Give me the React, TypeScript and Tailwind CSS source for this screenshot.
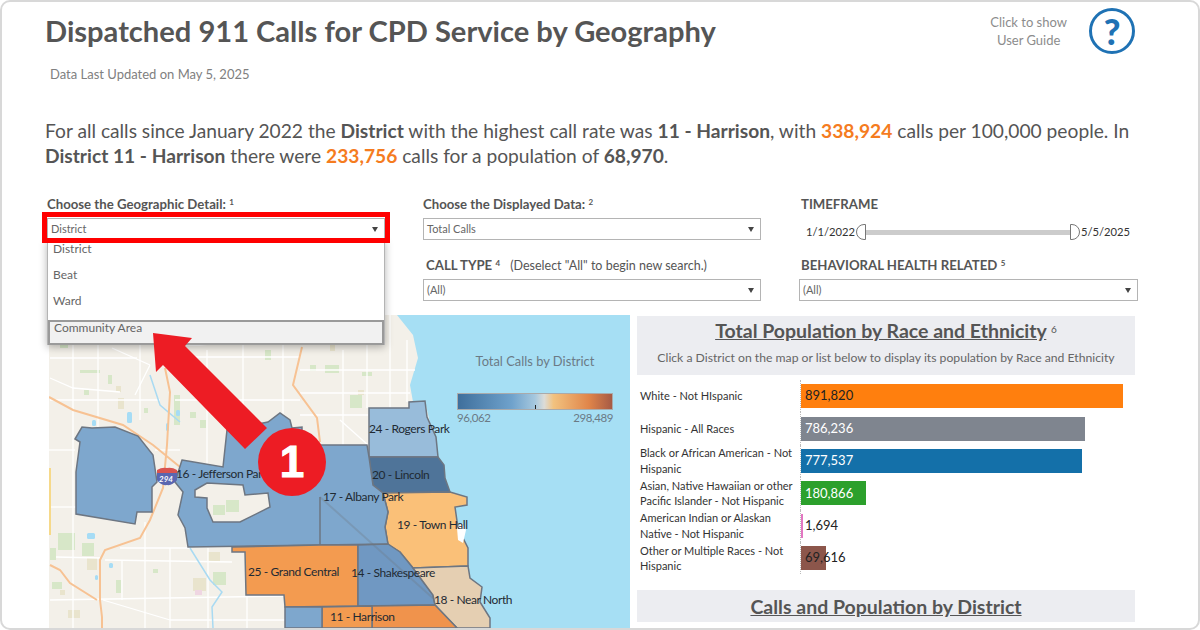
const races = [
  { label: "White - Not HIspanic", value: 891820, bar: "bg-[#ff7f0e]", text: "text-[#222]" },
  { label: "Hispanic - All Races", value: 786236, bar: "bg-[#7f858f]", text: "text-white" },
  { label: "Black or African American - Not Hispanic", value: 777537, bar: "bg-[#1470a9]", text: "text-white" },
  { label: "Asian, Native Hawaiian or other Pacific Islander - Not Hispanic", value: 180866, bar: "bg-[#2ca02c]", text: "text-white" },
  { label: "American Indian or Alaskan Native - Not Hispanic", value: 1694, bar: "bg-[#e377c2]", text: "text-[#222]" },
  { label: "Other or Multiple Races - Not Hispanic", value: 69616, bar: "bg-[#8c564b]", text: "text-[#222]" },
];

const districts = [
  { fill: "#98bcda", d: "M369 408 L409 408 L409 402 L425 401 L427 417 L436 437 L438 457 L369 457 Z" },
  { fill: "#4f7499", d: "M369 457 L438 457 L444 465 L445 478 L450 492 L383 493 L373 485 Z" },
  { fill: "#fac078", d: "M383 493 L450 492 L467 497 L467 505 L455 507 L458 528 L468 548 L468 566 L413 568 L400 552 L388 545 L385 527 L388 512 Z" },
  { fill: "#7ea7cd", d: "M75 439 L82 427 L92 428 L115 427 L138 436 L153 455 L157 482 L152 487 L152 512 L137 512 L135 524 L76 514 L76 472 L80 442 Z" },
  {
    // Jefferson Park and Albany Park read as one blue mass, with a hole around O'Hare side streets
    fill: "#7ea7cd",
    d: "M182 460 L223 467 L227 430 L268 422 L280 413 L290 420 L292 428 L302 427 L302 445 L367 445 L369 457 L373 485 L383 493 L388 512 L385 527 L388 544 L320 545 L188 547 L185 528 L178 515 L183 492 L175 482 Z M195 490 L207 483 L243 485 L245 495 L268 493 L270 507 L240 522 L213 522 L207 508 L207 498 L195 497 Z",
  },
  { fill: "#f39b50", d: "M232 547 L320 545 L358 545 L358 606 L285 607 L284 595 L246 595 L245 552 L232 552 Z" },
  { fill: "#7098c2", d: "M358 545 L388 544 L400 552 L413 568 L433 595 L435 605 L358 606 Z" },
  { fill: "#e5cfb2", d: "M413 568 L468 566 L470 578 L482 587 L480 602 L490 618 L490 628 L457 628 L435 605 L433 595 Z" },
  { fill: "#f0934c", d: "M372 606 L435 605 L457 628 L372 628 Z" },
  { fill: "#f39b50", d: "M322 607 L372 606 L372 628 L322 628 Z" },
  { fill: "#7ea7cd", d: "M285 607 L322 607 L322 628 L285 628 Z" },
];

const labels = [
  { text: "16 - Jefferson Park", x: 176, y: 478 },
  { text: "24 - Rogers Park", x: 369, y: 433 },
  { text: "20 - Lincoln", x: 372, y: 479 },
  { text: "17 - Albany Park", x: 323, y: 501 },
  { text: "19 - Town Hall", x: 397, y: 529 },
  { text: "14 - Shakespeare", x: 351, y: 577 },
  { text: "25 - Grand Central", x: 248, y: 576 },
  { text: "18 - Near North", x: 434, y: 604 },
  { text: "11 - Harrison", x: 330, y: 621 },
];

const roads = [
  "M50 358 L137 358",
  "M50 400 L160 400",
  "M73 345 L73 628",
  "M98 345 L98 440",
  "M112 348 L150 365",
  "M50 378 L73 388 L120 392",
  "M140 345 L140 420",
  "M150 365 L135 395",
  "M170 345 L200 345 L250 340",
  "M207 350 L207 465",
  "M243 345 L243 425",
  "M283 345 L283 420",
  "M180 357 L300 357",
  "M175 400 L300 400",
  "M49 450 L75 450",
  "M49 507 L76 507",
  "M155 450 L180 450",
  "M105 560 L232 562",
  "M56 557 L100 558",
  "M120 548 L190 548",
  "M50 600 L285 596",
  "M103 600 L170 620",
  "M170 620 L285 620",
  "M145 522 L145 628",
  "M170 548 L170 628",
  "M208 548 L208 628",
  "M247 596 L247 628",
  "M122 560 L122 600",
  "M305 340 L360 340",
  "M343 350 L343 445",
  "M367 330 L367 408",
  "M390 315 L390 408",
  "M407 340 L407 402",
  "M300 370 L415 370",
  "M300 393 L410 393",
  "M300 415 L368 415",
  "M340 420 L368 445",
];

const greens = [
  [58, 533, 17, 17], [82, 543, 12, 13], [52, 582, 10, 7], [116, 580, 5, 13], [153, 569, 5, 4], [213, 572, 13, 13],
  [108, 375, 4, 9], [84, 390, 5, 5], [144, 408, 4, 5], [200, 420, 6, 8], [255, 330, 14, 5], [265, 350, 6, 10],
  [325, 365, 14, 8], [362, 372, 10, 4], [350, 395, 12, 13], [60, 345, 8, 3], [80, 370, 20, 3], [297, 430, 8, 16],
  [190, 412, 6, 6], [174, 395, 6, 30], [50, 548, 6, 12], [335, 320, 10, 8], [310, 365, 6, 6], [213, 505, 12, 10],
  [226, 500, 13, 12],
];

const beiges = [
  [87, 558, 10, 12], [208, 552, 12, 10], [193, 578, 13, 13], [118, 398, 6, 11], [116, 386, 5, 6], [68, 610, 12, 8],
  [330, 345, 5, 6], [358, 390, 6, 5], [60, 590, 5, 5],
];

const lakes = [
  [87, 533, 8, 6], [109, 563, 4, 5], [95, 575, 3, 5], [127, 412, 5, 11], [92, 420, 4, 6], [176, 410, 4, 6], [166, 423, 3, 8],
];

function MapCanvas() {
  return (
    <svg viewBox="49 315 581 313" className="block h-[313px] w-[581px]">
      <rect x="49" y="315" width="581" height="313" fill="#a6dff4" />
      <polygon points="49,315 397,315 413,335 418,358 410,385 413,402 425,401 470,600 490,628 49,628" fill="#f3f0e9" />
      {greens.map(([x, y, w, h]) => (
        <rect key={`${x}-${y}`} x={x} y={y} width={w} height={h} fill="#d7e7c8" />
      ))}
      {beiges.map(([x, y, w, h]) => (
        <rect key={`${x}-${y}`} x={x} y={y} width={w} height={h} fill="#e9e4cd" />
      ))}
      {lakes.map(([x, y, w, h]) => (
        <rect key={`${x}-${y}`} x={x} y={y} width={w} height={h} rx="1.5" fill="#a6dcf5" />
      ))}
      <rect x="195" y="590" width="7" height="5" fill="#efd6e2" />
      {roads.map((d) => (
        <path key={d} d={d} stroke="#fff" strokeWidth="1.3" fill="none" />
      ))}
      <path d="M150 375 L160 405 L180 422 M190 548 L210 580 L222 592 L212 607 L213 628" stroke="#a9daf2" strokeWidth="1.5" fill="none" />
      <path
        d="M165 368 L170 392 L167 445 L163 488 L150 520 L140 538 L105 550 L100 560 L100 600 L102 617 L102 628 M49 397 L73 410 L123 425 L153 445 L180 467 M302 347 L293 385 L317 418 L320 442 M50 565 L60 570 L70 583 L97 600"
        stroke="#f7c293"
        strokeWidth="2"
        fill="none"
      />
      <line x1="50" y1="468" x2="50" y2="535" stroke="#f6d98a" strokeWidth="2" />
      {districts.map((d) => (
        <path key={d.d} d={d.d} fill={d.fill} fillRule="evenodd" stroke="#6d7682" strokeWidth="1.5" />
      ))}
      <path d="M320 497 L320 545" stroke="#6d7682" strokeWidth="1.5" />
      <path d="M320 497 L435 600" stroke="#6d7682" strokeOpacity=".3" strokeWidth="2" fill="none" />
      <path d="M457 528 L462 523 L466 530 L463 543 L458 540 Z" fill="#fff" />
      <path d="M157 470 L177 470 L177 480 Q172 486 167 485 Q161 486 157 480 Z" fill="#5a66b0" />
      <path d="M157 470 Q162 467 167 468 Q172 467 177 470 L177 473 L157 473 Z" fill="#d9534f" />
      <text x="159" y="482" fontSize="8" fontStyle="italic" fontWeight="700" fill="#fff">
        294
      </text>
      {labels.map((l) => (
        <text key={l.text} x={l.x} y={l.y} fontSize="12" letterSpacing="-0.4" fill="#1f2a33">
          {l.text}
        </text>
      ))}
    </svg>
  );
}

function Select({ value }: { value: string }) {
  return (
    <div className="flex h-[22px] items-center justify-between border border-[#b4b4b4] bg-white pl-[3px] pr-[6px] text-[11px] text-[#666]">
      <span>{value}</span>
      <span className="h-0 w-0 border-x-[3.5px] border-t-[5px] border-x-transparent border-t-[#444]" />
    </div>
  );
}

function FilterLabel({ children }: { children: React.ReactNode }) {
  return <div className="h-[25px] text-[13.2px] leading-[22px] text-[#555]">{children}</div>;
}

function Thumb({ flip }: { flip?: boolean }) {
  return (
    <span
      className={
        flip
          ? "h-4 w-[10px] shrink-0 rounded-r-full border border-[#777] bg-white"
          : "h-4 w-[10px] shrink-0 rounded-l-full border border-[#777] bg-white"
      }
    />
  );
}

export default function App() {
  return (
    <div className="relative h-[630px] w-[1200px] overflow-hidden rounded-[10px] bg-white font-['Lato',sans-serif] shadow-[inset_0_0_0_2px_#d8d8d8]">
      <header className="flex h-[94px] justify-between pl-[45px] pr-[65px]">
        <div>
          <h1 className="mt-[11px] text-[29.1px] font-bold leading-[40px] text-[#555]">
            Dispatched 911 Calls for CPD Service by Geography
          </h1>
          <p className="ml-[5px] mt-[15px] text-[13px] leading-4 text-[#808080]">Data Last Updated on May 5, 2025</p>
        </div>
        <div className="mt-2 flex items-start gap-[22px]">
          <p className="mt-[5px] text-center text-[13px] leading-[18px] text-[#8c8c8c]">
            Click to show
            <br />
            User Guide
          </p>
          <div className="flex h-[46px] w-[46px] items-center justify-center rounded-full border-[3.5px] border-[#1f72b4] text-[36px] font-black text-[#1f72b4]">
            ?
          </div>
        </div>
      </header>

      <p className="mt-[24px] h-[50px] pl-[45px] text-[19.2px] leading-[25px] text-[#555]">
        For all calls since January 2022 the <b>District</b> with the highest call rate was <b>11 - Harrison</b>, with{" "}
        <b className="text-[#f57c1f]">338,924</b> calls per 100,000 people. In
        <br />
        <b>District 11 - Harrison</b> there were <b className="text-[#f57c1f]">233,756</b> calls for a population of{" "}
        <b>68,970</b>.
      </p>

      <section className="mt-[25px] flex h-[122px] pl-[47px]">
        <div className="relative z-10 w-[338px]">
          <FilterLabel>
            <b>Choose the Geographic Detail:</b> <sup className="text-[8px] font-bold">1</sup>
          </FilterLabel>
          <div className="relative">
            <Select value="District" />
            <span className="absolute left-[-5px] top-[-6px] z-10 h-[31px] w-[348px] border-[5px] border-[#f00]" />
          </div>
          <ul className="h-[105px] border-x border-[#b4b4b4] bg-white text-[12px] text-[#666] shadow-[0_2px_8px_rgba(0,0,0,0.3)]">
            <li className="h-[22px] pl-[5px] leading-[18px]">District</li>
            <li className="h-[26px] pl-[5px] leading-[26px]">Beat</li>
            <li className="h-[32px] pl-[5px] leading-[26px]">Ward</li>
            <li className="h-[25px] border-2 border-[#9a9a9a] bg-[#f1f1f1] pl-[4px] leading-[12px]">Community Area</li>
          </ul>
        </div>

        <div className="ml-[38px] w-[338px]">
          <FilterLabel>
            <b>Choose the Displayed Data:</b> <sup className="text-[8px] font-bold">2</sup>
          </FilterLabel>
          <Select value="Total Calls" />
          <div className="mt-[14px] pl-[3px]">
            <FilterLabel>
              <b>CALL TYPE</b> <sup className="text-[8px] font-bold">4</sup>
              <span className="ml-[10px] text-[12.5px]">(Deselect "All" to begin new search.)</span>
            </FilterLabel>
          </div>
          <Select value="(All)" />
        </div>

        <div className="ml-[38px] w-[339px]">
          <div className="pl-[2px]">
            <FilterLabel>
              <b>TIMEFRAME</b>
            </FilterLabel>
          </div>
          <div className="flex h-[22px] items-center pl-[7px] pt-[6px] text-[11.2px] text-[#333]">
            <span className="w-[50px]">1/1/2022</span>
            <Thumb />
            <span className="h-[5px] w-[204px] bg-[#cccccc]" />
            <Thumb flip />
            <span className="ml-[1px]">5/5/2025</span>
          </div>
          <div className="mt-[14px] pl-[2px]">
            <FilterLabel>
              <b>BEHAVIORAL HEALTH RELATED</b> <sup className="text-[8px] font-bold">5</sup>
            </FilterLabel>
          </div>
          <Select value="(All)" />
        </div>
      </section>

      <main className="flex pl-[49px]">
        <div className="w-[581px]">
          <MapCanvas />
        </div>
        <aside className="ml-[7px] mt-px w-[498px]">
          <div className="h-[59px] bg-[#ecedf1] pt-[3px] text-center">
            <h2 className="text-[19.5px] font-bold leading-[24px] text-[#555]">
              <span className="underline">Total Population by Race and Ethnicity</span>{" "}
              <sup className="text-[10px] font-normal">6</sup>
            </h2>
            <p className="mt-[7px] text-[12.2px] leading-4 text-[#666]">
              Click a District on the map or list below to display its population by Race and Ethnicity
            </p>
          </div>
          <div className="mt-[5px]">
            {races.map((r) => (
              <div key={r.label} className="flex h-[32.4px] items-center">
                <div className="w-[163px] pl-[3px] text-[11px] leading-[15.5px] text-[#333]">{r.label}</div>
                <div className="relative flex h-full flex-1 items-center border-l border-dotted border-[#bbb]">
                  <div
                    className={`h-6 ${r.bar}`}
                    style={{ width: Math.max((r.value / 891820) * 322, 1.5) }}
                  />
                  <span className={`absolute left-[4px] text-[13px] ${r.text}`}>{r.value.toLocaleString("en-US")}</span>
                </div>
              </div>
            ))}
          </div>
          <div className="mt-[16px] flex h-[32px] items-center justify-center bg-[#ecedf1]">
            <h2 className="text-[19.5px] font-bold text-[#555] underline">Calls and Population by District</h2>
          </div>
        </aside>
      </main>

      {/* legend sits on the lake part of the map */}
      <div className="absolute left-[457px] top-[352px] w-[156px] text-[#6b7a85]">
        <p className="text-center text-[12.9px] leading-[18px]">Total Calls by District</p>
        <div className="relative mt-[23px] h-[17px] border border-[#aaa] bg-[linear-gradient(to_right,#3f6f9c,#6fa2cc_35%,#a6c8de_50%,#dcdcd8_56%,#f2c27f_62%,#e0854a_85%,#a65a45)]">
          <span className="absolute bottom-0 left-[77px] h-[4px] w-px bg-[#222]" />
        </div>
        <div className="flex justify-between text-[11.5px] leading-4 tracking-[-0.4px]">
          <span>96,062</span>
          <span>298,489</span>
        </div>
      </div>

      <svg viewBox="0 0 1200 630" className="pointer-events-none absolute inset-0 z-20 h-[630px] w-[1200px]">
        <polygon points="153,333 192,338 185,346 267,428 245,449 163,365 156,372" fill="#ed1c24" />
      </svg>
      <div className="absolute left-[258px] top-[428px] z-20 flex h-[68px] w-[68px] items-center justify-center rounded-full bg-[#ed1c24] font-['Liberation_Sans',sans-serif] text-[44px] font-bold text-white [-webkit-text-stroke:1px_white]">
        1
      </div>
    </div>
  );
}
